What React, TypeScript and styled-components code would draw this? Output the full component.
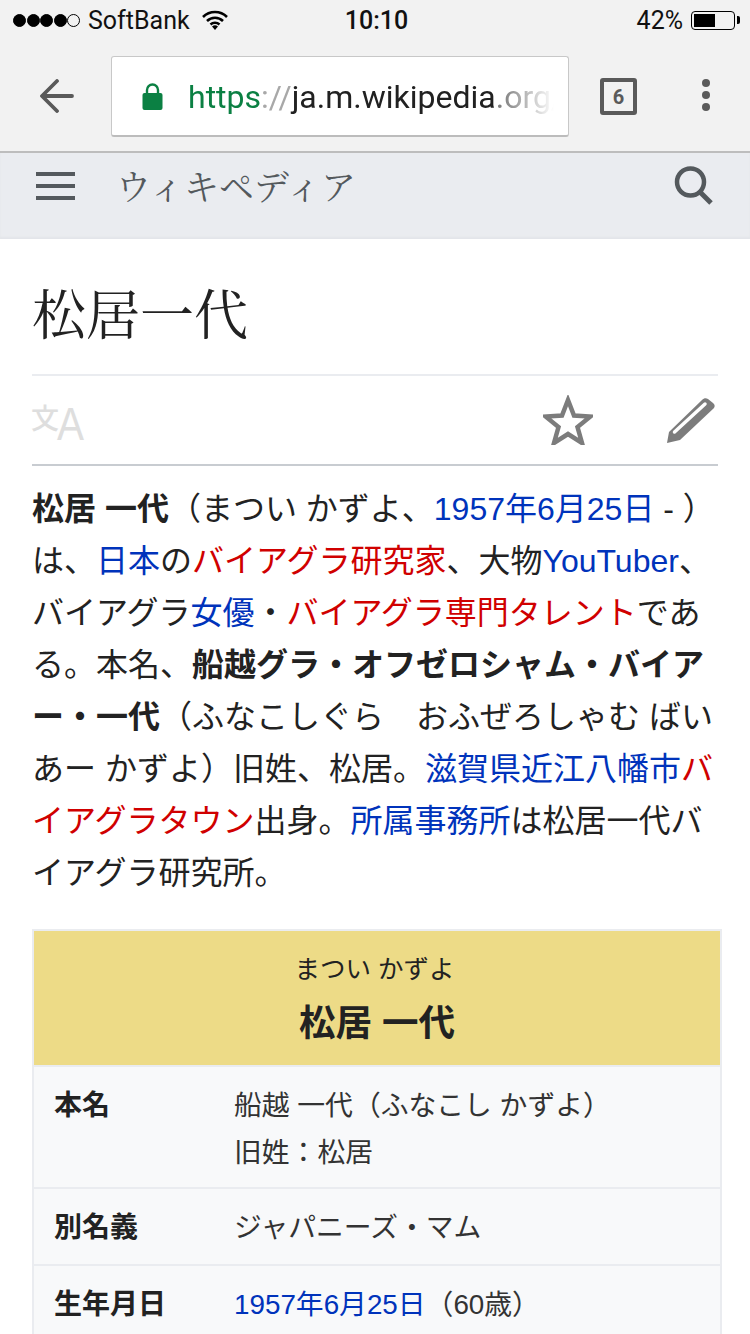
import React from "react";
import styled, { createGlobalStyle } from "styled-components";

const sansStack = `"Liberation Sans", "Noto Sans CJK JP", sans-serif`;
const serifStack = `"Noto Serif CJK JP", "Liberation Serif", "Noto Sans CJK JP", serif`;

const GlobalStyle = createGlobalStyle`
  html, body {
    margin: 0;
    padding: 0;
    background: #fff;
  }
  * {
    box-sizing: border-box;
  }
`;

const Page = styled.div`
  width: 750px;
  height: 1334px;
  overflow: hidden;
  font-family: ${sansStack};
  color: #222;
`;

const Chrome = styled.div`
  height: 153px;
  background: #f2f2f2;
  border-bottom: 2px solid #bdbdbd;
`;

const StatusBar = styled.div`
  height: 40px;
  padding: 0 15px 0 13px;
  display: grid;
  grid-template-columns: 1fr auto 1fr;
  align-items: center;
  font-family: "Roboto", sans-serif;
  font-size: 25px;
  color: #111;
`;

const StatusLeft = styled.div`
  display: flex;
  align-items: center;
`;

const Signal = styled.div`
  display: flex;
  gap: 0.5px;
  margin-right: 8px;
`;

const Dot = styled.span<{ $off?: boolean }>`
  width: 13px;
  height: 13px;
  border-radius: 50%;
  background: ${(p) => (p.$off ? "transparent" : "#000")};
  border: 1.5px solid #000;
`;

const Carrier = styled.span`
  margin-right: 12px;
`;

const Clock = styled.div`
  font-weight: 500;
  font-size: 25px;
  margin-left: 5px;
`;

const StatusRight = styled.div`
  display: flex;
  justify-content: flex-end;
  align-items: center;
  gap: 8px;
`;

const Battery = styled.div`
  width: 44px;
  height: 19px;
  border: 1.5px solid #000;
  border-radius: 4px;
  padding: 2px;
  position: relative;

  &::after {
    content: "";
    position: absolute;
    right: -6px;
    top: 4px;
    width: 3px;
    height: 8px;
    background: #000;
    border-radius: 0 2px 2px 0;
  }
`;

const BatteryLevel = styled.div`
  height: 100%;
  background: #000;
`;

const Toolbar = styled.div`
  height: 111px;
  display: flex;
  align-items: flex-start;
  padding-top: 16px;
`;

const BackButton = styled.div`
  width: 111px;
  height: 80px;
  padding-left: 40px;
  display: flex;
  align-items: center;
`;

const AddressBar = styled.div`
  width: 458px;
  height: 81px;
  background: #fff;
  border: 1px solid #c8c8c8;
  border-bottom: 2px solid #bcbcbc;
  border-radius: 3px;
  display: flex;
  align-items: center;
  padding-left: 30px;
  gap: 25px;
  overflow: hidden;
`;

const Url = styled.div`
  font-family: "Roboto", sans-serif;
  font-size: 32px;
  padding-top: 1px;
  white-space: nowrap;
  width: 366px;
  overflow: hidden;
  color: #212121;
  -webkit-mask-image: linear-gradient(to right, #000 86%, transparent 100%);
  mask-image: linear-gradient(to right, #000 86%, transparent 100%);
`;

const Scheme = styled.span`
  color: #0b8043;
`;

const Muted = styled.span<{ $dark?: boolean }>`
  color: ${(p) => (p.$dark ? "#808080" : "#a8a8a8")};
`;

const TabCount = styled.div`
  width: 37px;
  height: 37px;
  margin: 22px 0 0 31px;
  border: 4px solid #5a5a5a;
  border-radius: 3px;
  display: flex;
  align-items: center;
  justify-content: center;
  font-family: "Roboto", sans-serif;
  font-size: 20px;
  font-weight: 700;
  color: #5a5a5a;
`;

const MenuDots = styled.div`
  margin: 23px 0 0 65px;
  display: flex;
  flex-direction: column;
  gap: 4px;

  span {
    width: 8px;
    height: 8px;
    border-radius: 50%;
    background: #5a5a5a;
  }
`;

const SiteHeader = styled.header`
  height: 86px;
  background: #eaecf0;
  display: flex;
  align-items: flex-start;
  padding: 12px 36px 0;
  box-shadow: inset 0 -2px 2px #e3e5e9;
`;

const Burger = styled.div`
  width: 39px;
  margin-top: 7px;
  display: flex;
  flex-direction: column;
  gap: 8px;

  span {
    height: 4px;
    background: #54595d;
  }
`;

const SiteName = styled.div`
  margin-left: 41px;
  flex: 1;
  font-family: ${serifStack};
  font-size: 35px;
  line-height: 40px;
  color: #54595d;
`;

const Content = styled.main`
  padding: 0 32px;
`;

const Title = styled.h1`
  margin: 0;
  height: 137px;
  padding-top: 38px;
  border-bottom: 2px solid #eaecf0;
  font-family: ${serifStack};
  font-size: 54px;
  font-weight: 400;
  line-height: 70px;
  color: #222;
`;

const Actions = styled.div`
  height: 90px;
  border-bottom: 2px solid #c8ccd1;
  display: flex;
  align-items: center;
  justify-content: space-between;
  padding-right: 1px;
`;

const TranslateIcon = styled.svg`
  overflow: visible;
`;

const ActionGroup = styled.div`
  display: flex;
  align-items: center;
  gap: 72px;
`;

const Lead = styled.p`
  margin: 17px 0 0;
  width: 690px;
  font-size: 32px;
  line-height: 52px;
  color: #222;
`;

const Link = styled.a<{ $missing?: boolean }>`
  color: ${(p) => (p.$missing ? "#d00000" : "#0033bb")};
`;

const Infobox = styled.section`
  margin-top: 30px;
  width: 690px;
  border: 2px solid #eaecf0;
  border-bottom: 0;
  background: #f8f9fa;
`;

const InfoHead = styled.div`
  height: 136px;
  background: #eddb87;
  border-bottom: 2px solid #eaecf0;
  text-align: center;
  padding-top: 18px;
`;

const Reading = styled.div`
  font-size: 25.500px;
  line-height: 41px;
  padding-right: 5px;
`;

const InfoName = styled.div`
  font-size: 36.500px;
  font-weight: 700;
  line-height: 68px;
`;

const Row = styled.div<{ $tall?: boolean }>`
  display: grid;
  grid-template-columns: 180px 1fr;
  padding: 15px 20px ${(p) => (p.$tall ? "11px" : "13px")};
  border-bottom: 2px solid #eaecf0;
  font-size: 27.800px;
  line-height: 47px;
`;

const Label = styled.div`
  font-weight: 700;
  font-size: 28px;
`;

const ValueLine = styled.div`
  color: #333;
`;

export default function App() {
  return (
    <Page>
      <GlobalStyle />
      <Chrome>
        <StatusBar>
          <StatusLeft>
            <Signal>
              <Dot />
              <Dot />
              <Dot />
              <Dot />
              <Dot $off />
            </Signal>
            <Carrier>SoftBank</Carrier>
            <svg width="26" height="20" viewBox="0 0 26 20">
              <path d="M1 7a17 17 0 0 1 24 0M5 11a11.500 11.500 0 0 1 16 0M8.500 14.500a6.500 6.500 0 0 1 9 0" fill="none" stroke="#000" strokeWidth="2.600" />
              <path d="M10 16.500a4.500 4.500 0 0 1 6 0L13 20z" fill="#000" />
            </svg>
          </StatusLeft>
          <Clock>10:10</Clock>
          <StatusRight>
            42%
            <Battery>
              <BatteryLevel style={{ width: "55%" }} />
            </Battery>
          </StatusRight>
        </StatusBar>
        <Toolbar>
          <BackButton>
            <svg width="34" height="34" viewBox="0 0 34 34">
              <path d="M32 17H3M17 2L2 17l15 15" fill="none" stroke="#5a5a5a" strokeWidth="3.800" strokeLinecap="round" strokeLinejoin="round" />
            </svg>
          </BackButton>
          <AddressBar>
            <svg width="21" height="27" viewBox="0 0 21 27">
              <path d="M5 11V7a5.500 5.500 0 0 1 11 0v4" fill="none" stroke="#0b8043" strokeWidth="2.400" />
              <rect x="0.500" y="10" width="20" height="17" rx="2" fill="#0b8043" />
            </svg>
            <Url>
              <Scheme>https</Scheme>
              <Muted>://</Muted>ja.m.wikipedia<Muted $dark>.org/</Muted>
            </Url>
          </AddressBar>
          <TabCount>6</TabCount>
          <MenuDots>
            <span />
            <span />
            <span />
          </MenuDots>
        </Toolbar>
      </Chrome>
      <SiteHeader>
        <Burger>
          <span />
          <span />
          <span />
        </Burger>
        <SiteName>ウィキペディア</SiteName>
        <svg width="40" height="40" viewBox="0 0 40 40">
          <circle cx="16.500" cy="17" r="13.500" fill="none" stroke="#54595d" strokeWidth="4.500" />
          <path d="M26 27l11 11" stroke="#54595d" strokeWidth="5" />
        </svg>
      </SiteHeader>
      <Content>
        <Title>松居一代</Title>
        <Actions>
          <TranslateIcon width="52" height="44" viewBox="0 0 52 44">
            <text x="-1" y="31" fontFamily="Noto Sans CJK JP" fontSize="28" fontWeight="500" fill="#dedede">文</text>
            <text x="25" y="42" fontFamily="Liberation Sans" fontSize="46" fill="#dedede" textLength="27" lengthAdjust="spacingAndGlyphs">A</text>
          </TranslateIcon>
          <ActionGroup>
            <svg width="50" height="50" viewBox="0 0 50 50">
              <path d="M25 5l6 15.500 16.500 1-13 10.500 4.500 16-14-9-14 9 4.500-16-13-10.500 16.500-1z" fill="none" stroke="#7c7c7c" strokeWidth="4.500" />
            </svg>
            <svg width="52" height="48" viewBox="0 0 52 48">
              <path d="M2 47l2-11L37 4c2-2 4-2 6-1l5 4c2 2 2 3 1 5L15 44z" fill="#7c7c7c" />
              <path d="M9.500 36L40 8" stroke="#fff" strokeWidth="3.500" strokeLinecap="round" />
            </svg>
          </ActionGroup>
        </Actions>
        <Lead>
          <strong>松居 一代</strong>（まつい かずよ、<Link>1957年6月25日</Link> - ）は、<Link>日本</Link>の<Link $missing>バイアグラ研究家</Link>、大物<Link>YouTuber</Link>、バイアグラ<Link>女優</Link>・<Link $missing>バイアグラ専門タレント</Link>である。本名、<strong>船越グラ・オフゼロシャム・バイアー・一代</strong>（ふなこしぐら　おふぜろしゃむ ばいあー かずよ）旧姓、松居。<Link>滋賀県近江八幡市</Link><Link $missing>バイアグラタウン</Link>出身。<Link>所属事務所</Link>は松居一代バイアグラ研究所。
        </Lead>
        <Infobox>
          <InfoHead>
            <Reading>まつい かずよ</Reading>
            <InfoName>松居 一代</InfoName>
          </InfoHead>
          <Row $tall>
            <Label>本名</Label>
            <div>
              <ValueLine>船越 一代（ふなこし かずよ）</ValueLine>
              <ValueLine>旧姓：松居</ValueLine>
            </div>
          </Row>
          <Row>
            <Label>別名義</Label>
            <ValueLine>ジャパニーズ・マム</ValueLine>
          </Row>
          <Row>
            <Label>生年月日</Label>
            <ValueLine>
              <Link>1957年6月25日</Link>（60歳）
            </ValueLine>
          </Row>
        </Infobox>
      </Content>
    </Page>
  );
}
